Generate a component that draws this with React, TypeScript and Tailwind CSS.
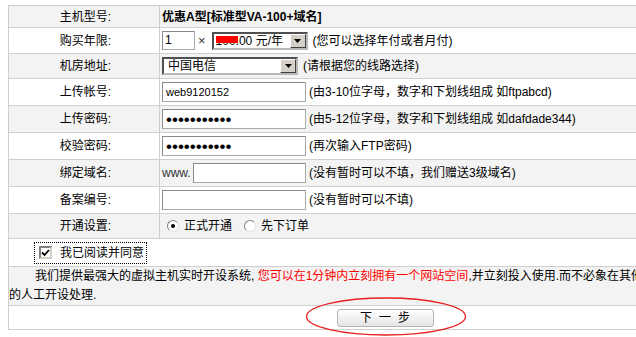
import React from 'react';

const BORDER = 'border-[#cfcfcf]';

const Row = ({
  label,
  h,
  gray,
  children,
}: {
  label: string;
  h: string;
  gray?: boolean;
  children: React.ReactNode;
}) => (
  <div className={`flex border-b ${BORDER} ${h} ${gray ? 'bg-[#f3f3f3]' : 'bg-white'}`}>
    <div className={`flex w-[151px] shrink-0 items-center justify-center border-r ${BORDER} pl-[3px]`}>
      {label}
    </div>
    <div className="flex flex-1 items-center pl-[2px]">{children}</div>
  </div>
);

const TextBox = ({ w, children }: { w: string; children?: React.ReactNode }) => (
  <div
    className={`flex h-[20px] shrink-0 items-center border border-[#a9a9a9] border-t-[#8a8a8a] border-l-[#8a8a8a] bg-white pl-[3px] ${w}`}
  >
    {children}
  </div>
);

const Arrow = () => (
  <div className="ml-auto flex h-[14px] w-[16px] shrink-0 items-center justify-center border border-t-white border-l-white border-b-[#404040] border-r-[#404040] bg-[#d4d0c8]">
    <svg width="7" height="4" viewBox="0 0 7 4">
      <path d="M0 0h7L3.5 4z" fill="#000" />
    </svg>
  </div>
);

const Select = ({ w, children }: { w: string; children: React.ReactNode }) => (
  <div
    className={`relative flex h-[18px] shrink-0 items-center border-2 border-t-[#505050] border-l-[#505050] border-b-[#b8b8b8] border-r-[#b8b8b8] bg-white ${w}`}
  >
    {children}
    <Arrow />
  </div>
);

const Radio = ({ checked }: { checked?: boolean }) => (
  <span className="flex h-[12px] w-[12px] items-center justify-center rounded-full border border-t-[#808080] border-l-[#808080] border-b-[#e2e2e2] border-r-[#e2e2e2] bg-white">
    {checked && <span className="h-[4px] w-[4px] rounded-full bg-black" />}
  </span>
);

const Dots = () => (
  <span className="font-['Liberation_Sans',sans-serif] text-[17px] leading-none tracking-[0px]">
    •••••••••••
  </span>
);

export default function App() {
  return (
    <div className="relative h-[337px] w-[636px] overflow-hidden bg-white font-['Liberation_Sans','Noto_Sans_CJK_SC',sans-serif] text-[12px] text-black">
      <div className={`ml-[8px] mt-[5px] w-[754px] border-x border-t ${BORDER}`}>
        <Row label="主机型号:" h="h-[22px]" gray>
          <span className="font-bold">优惠A型[标准型VA-100+域名]</span>
        </Row>

        <Row label="购买年限:" h="h-[26px]">
          <div className="flex h-[19px] w-[33px] items-start border border-[#a9a9a9] border-t-[#8a8a8a] border-l-[#8a8a8a] bg-white pl-[2px] text-[12px] leading-[16px]">
            1
          </div>
          <span className="ml-[3px] text-[13px] text-[#333]">×</span>
          <div className="ml-[6px]">
            <Select w="w-[96px]">
              <span className="pl-[2px] whitespace-nowrap">100.00 元/年</span>
              <span className="absolute left-[2px] top-[2px] h-[7px] w-[22px] bg-[#ff0000]" />
            </Select>
          </div>
          <span className="ml-[5px]">(您可以选择年付或者月付)</span>
        </Row>

        <Row label="机房地址:" h="h-[25px]" gray>
          <Select w="w-[136px]">
            <span className="pl-[4px]">中国电信</span>
          </Select>
          <span className="ml-[5px]">(请根据您的线路选择)</span>
        </Row>

        <Row label="上传帐号:" h="h-[27px]">
          <TextBox w="w-[144px]">
            <span className="text-[11px]">web9120152</span>
          </TextBox>
          <span className="ml-[3px]">(由3-10位字母，数字和下划线组成 如ftpabcd)</span>
        </Row>

        <Row label="上传密码:" h="h-[27px]" gray>
          <TextBox w="w-[144px]">
            <Dots />
          </TextBox>
          <span className="ml-[3px]">(由5-12位字母，数字和下划线组成 如dafdade344)</span>
        </Row>

        <Row label="校验密码:" h="h-[27px]">
          <TextBox w="w-[144px]">
            <Dots />
          </TextBox>
          <span className="ml-[3px]">(再次输入FTP密码)</span>
        </Row>

        <Row label="绑定域名:" h="h-[27px]" gray>
          <span className="w-[31px] text-[#333]">www.</span>
          <TextBox w="w-[113px]" />
          <span className="ml-[3px]">(没有暂时可以不填，我们赠送3级域名)</span>
        </Row>

        <Row label="备案编号:" h="h-[27px]">
          <TextBox w="w-[144px]" />
          <span className="ml-[3px]">(没有暂时可以不填)</span>
        </Row>

        <Row label="开通设置:" h="h-[25px]" gray>
          <div className="ml-[5px] flex items-center gap-[5px]">
            <Radio checked />
            <span>正式开通</span>
          </div>
          <div className="ml-[12px] flex items-center gap-[5px]">
            <Radio />
            <span>先下订单</span>
          </div>
        </Row>

        <div className={`flex h-[28px] items-center border-b ${BORDER} bg-white`}>
          <div className="ml-[25px] flex h-[22px] items-center gap-[8px] border border-dotted border-black pl-[4px] pr-[2px]">
            <span className="flex h-[13px] w-[13px] items-center justify-center border-2 border-t-[#808080] border-l-[#808080] border-b-[#d4d0c8] border-r-[#d4d0c8] bg-white">
              <svg width="9" height="8" viewBox="0 0 9 8">
                <path d="M1 3.5l2.5 2.5L8 1" stroke="#000" strokeWidth="1.8" fill="none" />
              </svg>
            </span>
            <span>我已阅读并同意</span>
          </div>
        </div>

        <div className={`flex h-[39px] items-center border-b ${BORDER} bg-[#f3f3f3]`}>
          <div className="leading-[19px]">
            <div className="whitespace-nowrap indent-[26px]">
              我们提供最强大的虚拟主机实时开设系统,{' '}
              <span className="text-[#ff0000]">您可以在1分钟内立刻拥有一个网站空间</span>
              ,并立刻投入使用.而不必象在其他主机商那里等待数小时
            </div>
            <div>的人工开设处理.</div>
          </div>
        </div>

        <div className={`flex h-[24px] items-center justify-center border-b ${BORDER} bg-white`}>
          <button className="flex h-[18px] w-[97px] items-center justify-center rounded-[3px] border border-[#b4b4b4] bg-gradient-to-b from-white to-[#e4e4e4] text-[12px] tracking-[7px] pl-[7px]">
            下一步
          </button>
        </div>
      </div>

      <svg className="absolute left-[305px] top-[297px]" width="162" height="40" viewBox="0 0 162 40">
        <ellipse cx="81" cy="19.5" rx="79.5" ry="18.5" fill="none" stroke="#e82020" strokeWidth="1.3" />
      </svg>
    </div>
  );
}
